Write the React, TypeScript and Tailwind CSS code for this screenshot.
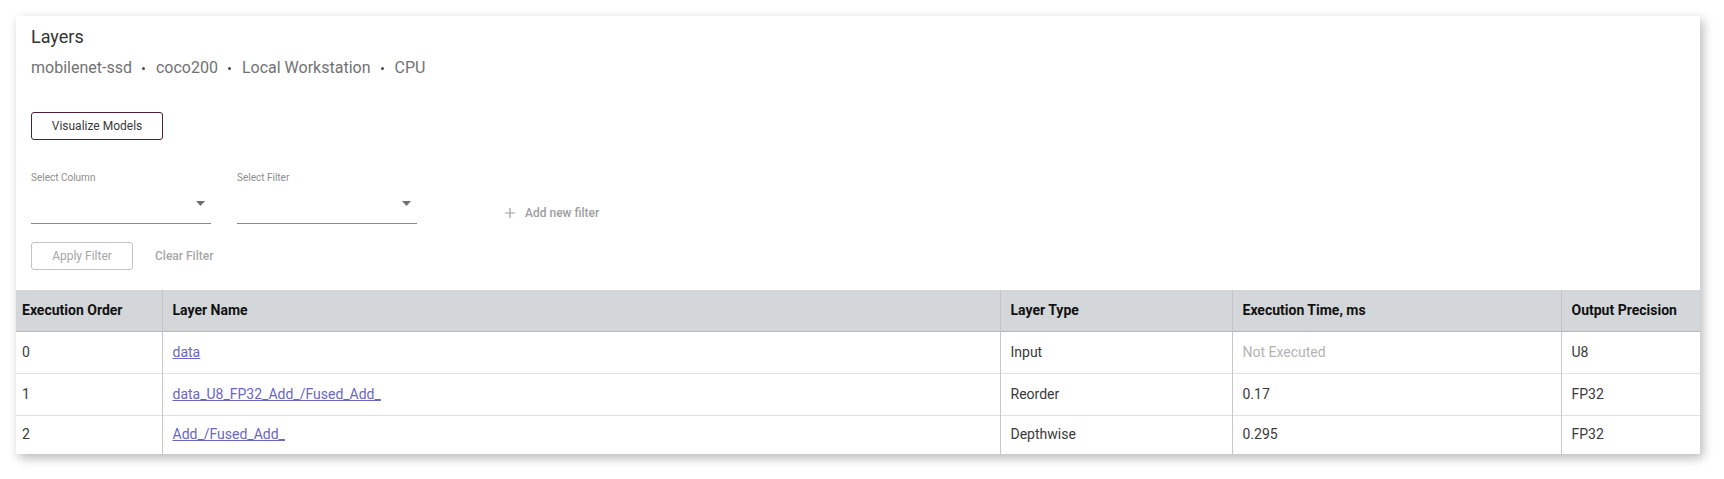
import React from "react";

type LayerRow = {
  order: string;
  name: string;
  type: string;
  time: string;
  precision: string;
  executed: boolean;
};

const rows: LayerRow[] = [
  { order: "0", name: "data", type: "Input", time: "Not Executed", precision: "U8", executed: false },
  { order: "1", name: "data_U8_FP32_Add_/Fused_Add_", type: "Reorder", time: "0.17", precision: "FP32", executed: true },
  { order: "2", name: "Add_/Fused_Add_", type: "Depthwise", time: "0.295", precision: "FP32", executed: true },
];

function Dot() {
  return <span className="inline-block w-[3px] h-[3px] rounded-full bg-[#4a4a4a] mx-[10.5px] align-middle" />;
}

function SelectField({ label }: { label: string }) {
  return (
    <div className="w-[180px] flex flex-col">
      <div className="text-[10px] leading-[12px] text-[#8e8e8e]">{label}</div>
      <div className="h-[40px] border-b border-[#8a8a8a] flex items-center justify-end pr-[6px]">
        <svg width="9" height="5" viewBox="0 0 9 5">
          <path d="M0 0 L9 0 L4.5 5 Z" fill="#6f6f6f" />
        </svg>
      </div>
    </div>
  );
}

export default function App() {
  return (
    <div className="bg-white w-[1724px] h-[479px] pt-[16px] pl-[16px] font-['Roboto',sans-serif]">
      <div className="w-[1684px] bg-white shadow-[3px_4px_10px_rgba(0,0,0,0.28)]">
        {/* Header + filters */}
        <div className="px-[15px] pt-[9px]">
          <div className="text-[18px] leading-[24px] text-[#333]">Layers</div>
          <div className="mt-[7px] text-[16px] leading-[24px] text-[#727272]">
            <span>mobilenet-ssd</span>
            <Dot />
            <span>coco200</span>
            <Dot />
            <span>Local Workstation</span>
            <Dot />
            <span>CPU</span>
          </div>

          <button
            type="button"
            className="mt-[32px] w-[132px] h-[28px] border border-[#4f1f38] rounded-[3px] text-[12px] text-[#3a3a3a] bg-white"
          >
            Visualize Models
          </button>

          <div className="mt-[32px] flex items-end">
            <SelectField label="Select Column" />
            <div className="ml-[26px]">
              <SelectField label="Select Filter" />
            </div>
            <div className="ml-[88px] mb-[5px] flex items-center text-[12px] leading-[12px] font-medium text-[#9e9e9e]">
              <svg width="10" height="10" viewBox="0 0 10 10" className="mr-[10px]">
                <path d="M5 0 V10 M0 5 H10" stroke="#9e9e9e" strokeWidth="1.2" />
              </svg>
              Add new filter
            </div>
          </div>

          <div className="mt-[18px] flex items-center">
            <button
              type="button"
              className="w-[102px] h-[28px] border border-[#c4c4c4] rounded-[3px] text-[12px] text-[#a6a6a6] bg-white"
            >
              Apply Filter
            </button>
            <span className="ml-[22px] text-[12px] font-medium text-[#a8a8a8]">Clear Filter</span>
          </div>
        </div>

        {/* Table */}
        <table className="mt-[20px] w-full table-fixed border-collapse text-[14px]">
          <colgroup>
            <col className="w-[146px]" />
            <col className="w-[838px]" />
            <col className="w-[232px]" />
            <col className="w-[329px]" />
            <col />
          </colgroup>
          <thead>
            <tr className="h-[41px] bg-[#d4d7da] border-b border-[#b4b6b8]">
              <th className="text-left font-bold text-[#111] pl-[6px]">Execution Order</th>
              <th className="text-left font-bold text-[#111] pl-[10px] border-l border-[#c2c4c7]">Layer Name</th>
              <th className="text-left font-bold text-[#111] pl-[10px] border-l border-[#c2c4c7]">Layer Type</th>
              <th className="text-left font-bold text-[#111] pl-[10px] border-l border-[#c2c4c7]">Execution Time, ms</th>
              <th className="text-left font-bold text-[#111] pl-[10px] border-l border-[#c2c4c7]">Output Precision</th>
            </tr>
          </thead>
          <tbody>
            {rows.map((r, i) => (
              <tr
                key={r.order}
                className={i < rows.length - 1 ? "h-[42px] border-b border-[#e0e0e0]" : "h-[39px]"}
              >
                <td className="pl-[6px] text-[#3a3a3a]">{r.order}</td>
                <td className="pl-[10px] border-l border-[#c8c8c8]">
                  <a href="#" className="text-[#6a66c4] underline">
                    {r.name}
                  </a>
                </td>
                <td className="pl-[10px] border-l border-[#c8c8c8] text-[#3a3a3a]">{r.type}</td>
                <td className={"pl-[10px] border-l border-[#c8c8c8] " + (r.executed ? "text-[#3a3a3a]" : "text-[#b3b3b3]")}>
                  {r.time}
                </td>
                <td className="pl-[10px] border-l border-[#c8c8c8] text-[#3a3a3a]">{r.precision}</td>
              </tr>
            ))}
          </tbody>
        </table>
      </div>
    </div>
  );
}
